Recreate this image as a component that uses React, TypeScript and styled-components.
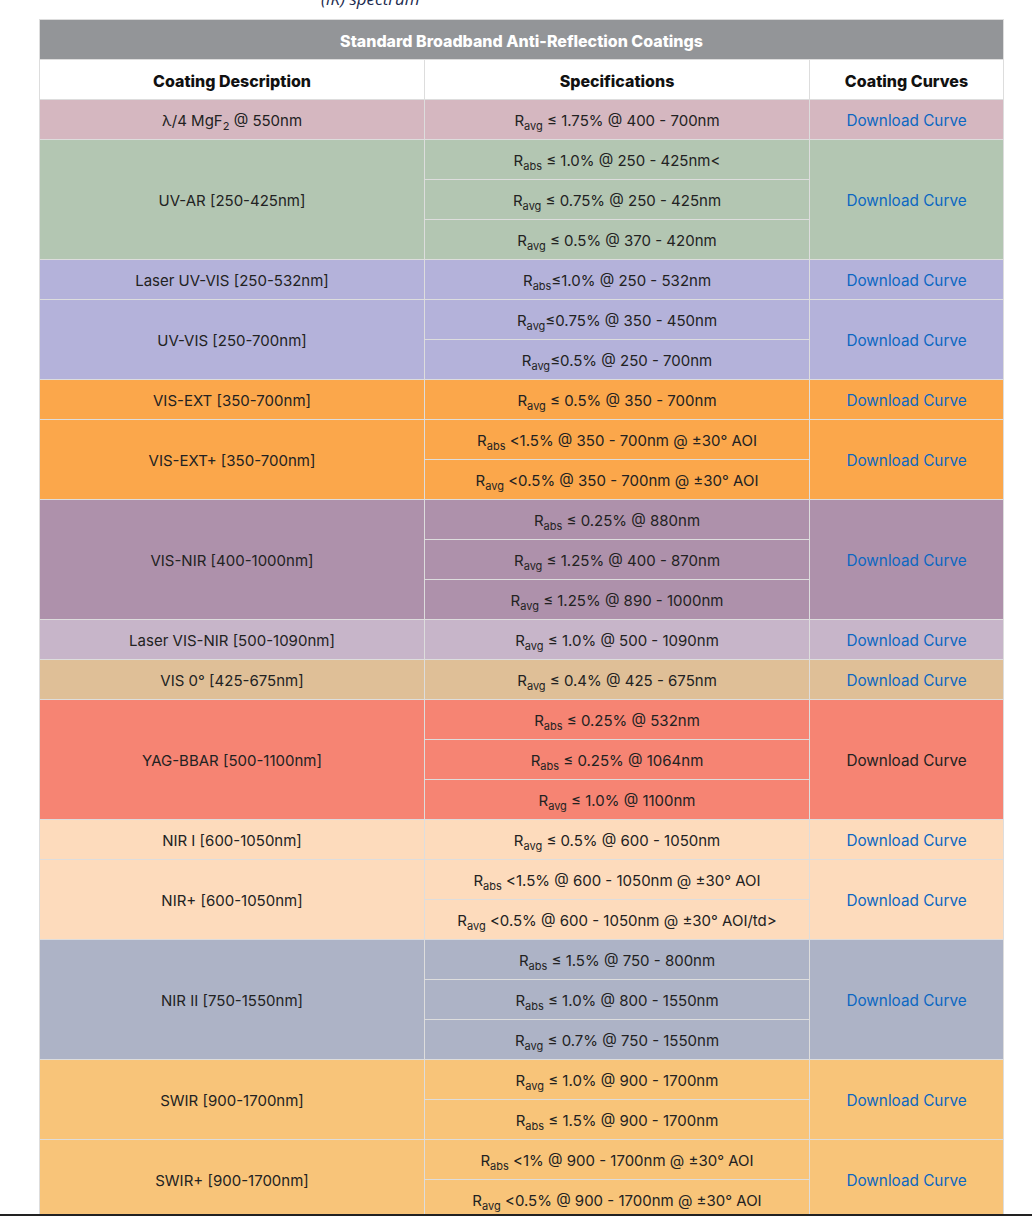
import React from "react";
import styled, { createGlobalStyle } from "styled-components";

const GlobalStyle = createGlobalStyle`
  html, body { margin: 0; padding: 0; background: #ffffff; }
  body { font-family: Inter, "Noto Sans", sans-serif; color: #222222; }
`;

type Sub = "abs" | "avg";
type Spec = { sub: Sub; text: string };
type Group = { desc: React.ReactNode; color: string; specs: Spec[]; dark?: boolean };

const groups: Group[] = [
  { desc: <>λ/4 MgF<sub>2</sub> @ 550nm</>, color: "#d5b7c0", specs: [{ sub: "avg", text: " ≤ 1.75% @ 400 - 700nm" }] },
  {
    desc: "UV-AR [250-425nm]",
    color: "#b3c6b2",
    specs: [
      { sub: "abs", text: " ≤ 1.0% @ 250 - 425nm<" },
      { sub: "avg", text: " ≤ 0.75% @ 250 - 425nm" },
      { sub: "avg", text: " ≤ 0.5% @ 370 - 420nm" },
    ],
  },
  { desc: "Laser UV-VIS [250-532nm]", color: "#b4b2da", specs: [{ sub: "abs", text: "≤1.0% @ 250 - 532nm" }] },
  {
    desc: "UV-VIS [250-700nm]",
    color: "#b4b2da",
    specs: [
      { sub: "avg", text: "≤0.75% @ 350 - 450nm" },
      { sub: "avg", text: "≤0.5% @ 250 - 700nm" },
    ],
  },
  { desc: "VIS-EXT [350-700nm]", color: "#fba74b", specs: [{ sub: "avg", text: " ≤ 0.5% @ 350 - 700nm" }] },
  {
    desc: "VIS-EXT+ [350-700nm]",
    color: "#fba74b",
    specs: [
      { sub: "abs", text: " <1.5% @ 350 - 700nm @ ±30° AOI" },
      { sub: "avg", text: " <0.5% @ 350 - 700nm @ ±30° AOI" },
    ],
  },
  {
    desc: "VIS-NIR [400-1000nm]",
    color: "#ae91ab",
    specs: [
      { sub: "abs", text: " ≤ 0.25% @ 880nm" },
      { sub: "avg", text: " ≤ 1.25% @ 400 - 870nm" },
      { sub: "avg", text: " ≤ 1.25% @ 890 - 1000nm" },
    ],
  },
  { desc: "Laser VIS-NIR [500-1090nm]", color: "#c7b5c9", specs: [{ sub: "avg", text: " ≤ 1.0% @ 500 - 1090nm" }] },
  { desc: "VIS 0° [425-675nm]", color: "#dfbf97", specs: [{ sub: "avg", text: " ≤ 0.4% @ 425 - 675nm" }] },
  {
    desc: "YAG-BBAR [500-1100nm]",
    color: "#f68473",
    dark: true,
    specs: [
      { sub: "abs", text: " ≤ 0.25% @ 532nm" },
      { sub: "abs", text: " ≤ 0.25% @ 1064nm" },
      { sub: "avg", text: " ≤ 1.0% @ 1100nm" },
    ],
  },
  { desc: "NIR I [600-1050nm]", color: "#fddbbc", specs: [{ sub: "avg", text: " ≤ 0.5% @ 600 - 1050nm" }] },
  {
    desc: "NIR+ [600-1050nm]",
    color: "#fddbbc",
    specs: [
      { sub: "abs", text: " <1.5% @ 600 - 1050nm @ ±30° AOI" },
      { sub: "avg", text: " <0.5% @ 600 - 1050nm @ ±30° AOI/td>" },
    ],
  },
  {
    desc: "NIR II [750-1550nm]",
    color: "#adb3c6",
    specs: [
      { sub: "abs", text: " ≤ 1.5% @ 750 - 800nm" },
      { sub: "abs", text: " ≤ 1.0% @ 800 - 1550nm" },
      { sub: "avg", text: " ≤ 0.7% @ 750 - 1550nm" },
    ],
  },
  {
    desc: "SWIR [900-1700nm]",
    color: "#f8c479",
    specs: [
      { sub: "avg", text: " ≤ 1.0% @ 900 - 1700nm" },
      { sub: "abs", text: " ≤ 1.5% @ 900 - 1700nm" },
    ],
  },
  {
    desc: "SWIR+ [900-1700nm]",
    color: "#f8c479",
    specs: [
      { sub: "abs", text: " <1% @ 900 - 1700nm @ ±30° AOI" },
      { sub: "avg", text: " <0.5% @ 900 - 1700nm @ ±30° AOI" },
    ],
  },
];

const Viewport = styled.div`
  height: 1216px;
  overflow: hidden;
  box-sizing: border-box;
  border-bottom: 2px solid #222222;
`;

const Content = styled.div`
  margin-top: -11px;
`;

const Caption = styled.p`
  margin: 0;
  height: 20px;
  padding-left: 321px;
  font-family: "Open Sans", sans-serif;
  font-style: italic;
  font-size: 17px;
  line-height: 20px;
  color: #1c2b4f;
`;

const Table = styled.table`
  margin: 10px 0 0 39px;
  width: 964px;
  border-collapse: collapse;
  table-layout: fixed;
  font-size: 15px;
  border: 1px solid #dddddd;
`;

const TitleCell = styled.th`
  height: 36px;
  padding: 3px 0 0;
  background: #939598;
  color: #ffffff;
  font-weight: 800;
  font-size: 16px;
  text-align: center;
  border: 1px solid #dddddd;
`;

const HeadCell = styled.th`
  height: 36px;
  padding: 3px 0 0;
  background: #ffffff;
  color: #111111;
  font-weight: 800;
  font-size: 16px;
  text-align: center;
  border: 1px solid #dddddd;
`;

const Cell = styled.td<{ $bg: string }>`
  height: 36px;
  padding: 3px 0 0;
  background: ${(p) => p.$bg};
  color: #222222;
  text-align: center;
  vertical-align: middle;
  border: 1px solid #dddddd;
  line-height: 20px;

  sub {
    font-size: 11px;
    line-height: 0;
    vertical-align: -4px;
  }
`;

const CurveLink = styled.a<{ $dark?: boolean }>`
  color: ${(p) => (p.$dark ? "#222222" : "#0b67c2")};
  text-decoration: none;
  font-size: 15.3px;
`;

export default function App() {
  return (
    <>
      <GlobalStyle />
      <Viewport>
        <Content>
          <Caption>(IR) spectrum</Caption>
          <Table>
            <colgroup>
              <col style={{ width: 385 }} />
              <col style={{ width: 385 }} />
              <col style={{ width: 194 }} />
            </colgroup>
            <thead>
              <tr>
                <TitleCell colSpan={3}>Standard Broadband Anti-Reflection Coatings</TitleCell>
              </tr>
              <tr>
                <HeadCell>Coating Description</HeadCell>
                <HeadCell>Specifications</HeadCell>
                <HeadCell>Coating Curves</HeadCell>
              </tr>
            </thead>
            <tbody>
              {groups.map((g, gi) =>
                g.specs.map((s, si) => (
                  <tr key={`${gi}-${si}`}>
                    {si === 0 && (
                      <Cell $bg={g.color} rowSpan={g.specs.length}>
                        {g.desc}
                      </Cell>
                    )}
                    <Cell $bg={g.color}>
                      R<sub>{s.sub}</sub>
                      {s.text}
                    </Cell>
                    {si === 0 && (
                      <Cell $bg={g.color} rowSpan={g.specs.length}>
                        <CurveLink href="#" $dark={g.dark}>
                          Download Curve
                        </CurveLink>
                      </Cell>
                    )}
                  </tr>
                ))
              )}
            </tbody>
          </Table>
        </Content>
      </Viewport>
    </>
  );
}
